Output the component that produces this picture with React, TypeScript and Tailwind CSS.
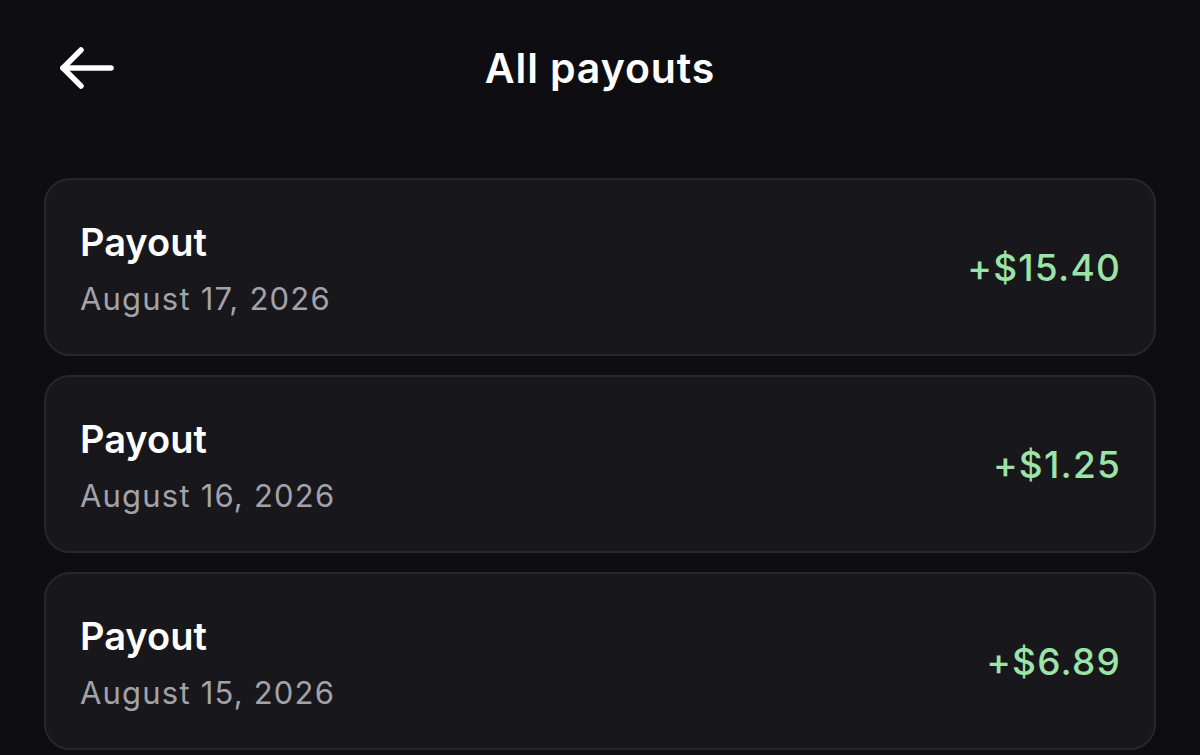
import React from 'react';

const payouts = [
  { date: 'August 17, 2026', amount: '+$15.40' },
  { date: 'August 16, 2026', amount: '+$1.25' },
  { date: 'August 15, 2026', amount: '+$6.89' },
];

function BackArrow() {
  return (
    <svg width="56" height="44" viewBox="0 0 56 44" fill="none" stroke="currentColor" strokeWidth="5.5" strokeLinecap="round" strokeLinejoin="round">
      <path d="M53 22H5" />
      <path d="M23 4L5 22l18 18" />
    </svg>
  );
}

export default function App() {
  return (
    <div className="w-[1200px] h-[755px] overflow-hidden bg-[#0e0e12] text-white" style={{ fontFamily: 'Inter, "Noto Sans", sans-serif' }}>
      <header className="relative h-[140px] flex items-center justify-center">
        <button className="absolute left-[58px] top-[46px] text-white">
          <BackArrow />
        </button>
        <h1 className="text-[41px] font-semibold tracking-[0.9px] leading-none -mt-[4px]">All payouts</h1>
      </header>
      <div className="px-[44px] pt-[38px] flex flex-col gap-[19px]">
        {payouts.map((p) => (
          <div
            key={p.date}
            className="h-[178px] rounded-[26px] bg-[#18171c] border-2 border-[#27262c] flex items-center justify-between pl-[34px] pr-[33px]"
          >
            <div className="flex flex-col gap-[22px] pt-[2px]">
              <div className="text-[38px] font-semibold leading-none">Payout</div>
              <div className="text-[31px] leading-none tracking-[1.2px] text-[#a3a2a9]">{p.date}</div>
            </div>
            <div className="text-[37px] font-medium leading-none tracking-[1.2px] text-[#9be3a6]">{p.amount}</div>
          </div>
        ))}
      </div>
    </div>
  );
}
